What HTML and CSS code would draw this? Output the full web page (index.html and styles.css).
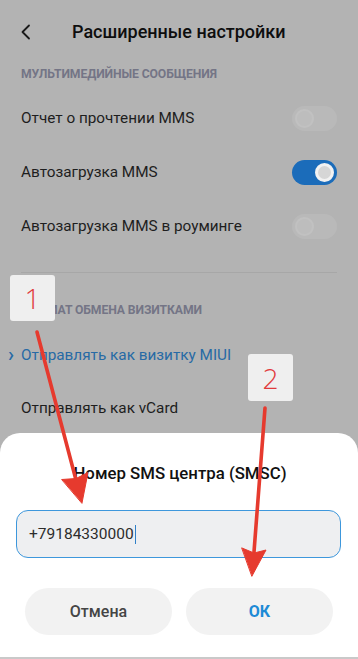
FILE: index.html
```html
<!DOCTYPE html>
<html lang="ru">
<head>
<meta charset="utf-8">
<link rel="stylesheet" href="styles.css">
</head>
<body>
<div class="screen">
  <header class="header">
    <svg class="back" width="12" height="16" viewBox="0 0 12 16"><path d="M9 1.5 L2.5 8 L9 14.5" fill="none" stroke="#1a1a1a" stroke-width="1.8" stroke-linecap="round" stroke-linejoin="round"/></svg>
    <h1 class="title">Расширенные настройки</h1>
  </header>

  <div class="section-label first">МУЛЬТИМЕДИЙНЫЕ СООБЩЕНИЯ</div>
  <div class="row"><span class="row-text">Отчет о прочтении MMS</span><span class="toggle off"><span class="knob"></span></span></div>
  <div class="row"><span class="row-text">Автозагрузка MMS</span><span class="toggle on"><span class="knob"></span></span></div>
  <div class="row"><span class="row-text">Автозагрузка MMS в роуминге</span><span class="toggle off"><span class="knob"></span></span></div>

  <div class="divider"></div>

  <div class="section-label second">ФОРМАТ ОБМЕНА ВИЗИТКАМИ</div>
  <div class="row short selected"><span class="mark">›</span><span class="row-text">Отправлять как визитку MIUI</span></div>
  <div class="row short"><span class="row-text">Отправлять как vCard</span></div>

  <div class="dialog">
    <div class="dialog-title">Номер SMS центра (SMSC)</div>
    <div class="input"><span class="input-text">+79184330000</span><span class="caret"></span></div>
    <div class="buttons">
      <div class="btn cancel">Отмена</div>
      <div class="btn ok">ОК</div>
    </div>
  </div>

  <div class="badge badge-1">1</div>
  <div class="badge badge-2">2</div>

  <svg class="arrows" width="358" height="659" viewBox="0 0 358 659">
    <g fill="#e63a2e" stroke="#e63a2e" stroke-linecap="round">
      <line x1="37" y1="332" x2="76" y2="480" stroke-width="3.6"/>
      <path d="M82 503 L88 472.5 L76 478.5 L62 479.5 Z" stroke-width="1" stroke-linejoin="round"/>
      <line x1="265" y1="408" x2="254" y2="552" stroke-width="3.6"/>
      <path d="M252 576 L266 550 L254 553 L242 548 Z" stroke-width="1" stroke-linejoin="round"/>
    </g>
  </svg>
</div>
</body>
</html>
```

FILE: styles.css
```css
* { box-sizing: border-box; margin: 0; padding: 0; }
html, body { width: 358px; height: 659px; overflow: hidden; }
body { background: #b3b3b3; font-family: Roboto, "Noto Sans", "DejaVu Sans", sans-serif; color: #1c1c1c; }

.screen { position: relative; width: 358px; height: 659px; overflow: hidden; }

.header { height: 62px; display: flex; align-items: center; padding-left: 20px; }
.back { display: block; margin-top: 1px; }
.title { font-size: 18px; font-weight: 500; color: #0e0e0e; margin-left: 40px; }

.section-label { font-size: 12.2px; font-weight: 700; color: #747586; padding: 0 21px; line-height: 16px; letter-spacing: -0.1px; }
.section-label.first { margin-top: 4px; margin-bottom: 9px; }
.section-label.second { margin-top: 29px; margin-bottom: 10px; }

.row { height: 54px; display: flex; align-items: center; justify-content: space-between; padding: 0 21px; position: relative; }
.row.short { height: 53px; justify-content: flex-start; }
.row-text { font-size: 15.3px; color: #1e1e1e; }
.selected .row-text { color: #276aa5; }
.mark { position: absolute; left: 8px; top: 50%; transform: translateY(-55%); font-size: 20px; color: #276aa5; font-weight: 500; }

.toggle { width: 45px; height: 25px; border-radius: 13px; display: flex; align-items: center; padding: 0 3px; }
.toggle.on { background: #1b6cba; justify-content: flex-end; }
.toggle.off { background: #b9b9b9; justify-content: flex-start; }
.knob { width: 19px; height: 19px; border-radius: 50%; }
.on .knob { background: #d6d6d6; border: 3px solid #f2f2f2; }
.off .knob { background: #bdbdbd; border: 2px solid #c1c1c1; }

.divider { height: 1px; background: #a7a7a7; margin: 19px 21px 0; }

.dialog { position: absolute; left: 0; right: 0; bottom: 0; height: 226px; background: #fff; border-radius: 20px 20px 0 0; border-bottom: 2px solid #c9c9c9; padding-top: 29px; }
.dialog-title { text-align: center; font-size: 16.8px; font-weight: 500; color: #111; line-height: 22px; padding-left: 2px; }
.input { margin: 26px 17px 0 16px; height: 48px; border: 1.5px solid #3d97dc; border-radius: 12px; background: #eeeff1; display: flex; align-items: center; padding-left: 12px; }
.input-text { font-size: 15.5px; color: #2c2c2c; }
.caret { width: 1px; height: 19px; background: #2f80c8; margin-left: 1px; }
.buttons { display: flex; gap: 14px; padding: 0 25px; margin-top: 30px; }
.btn { flex: 1; height: 47px; border-radius: 24px; background: #f2f2f2; display: flex; align-items: center; justify-content: center; font-size: 16px; font-weight: 500; }
.btn.cancel { color: #454545; }
.btn.ok { color: #1d8ad6; font-weight: 700; }

.badge { position: absolute; width: 45px; height: 46px; background: #efefef; border-radius: 3px; display: flex; align-items: center; justify-content: center; font-size: 28px; font-weight: 300; color: #e13a3c; font-family: "Open Sans", Roboto, sans-serif; }
.badge-1 { left: 10px; top: 275px; }
.badge-2 { left: 248px; top: 354px; height: 47px; }

.arrows { position: absolute; left: 0; top: 0; pointer-events: none; }
```
